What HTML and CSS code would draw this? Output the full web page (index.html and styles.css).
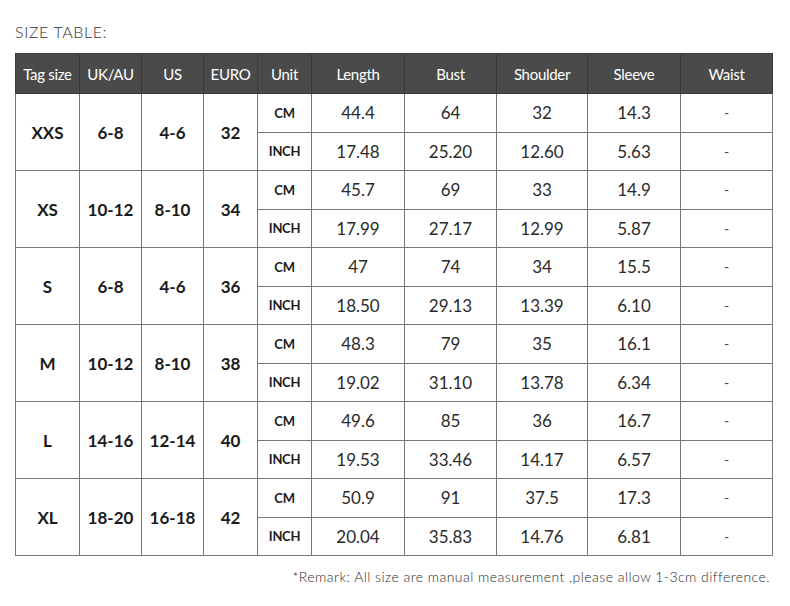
FILE: index.html
```html
<!DOCTYPE html>
<html>
<head>
<meta charset="utf-8">
<link rel="stylesheet" href="styles.css">
</head>
<body>
<div class="page">
  <div class="title">SIZE TABLE:</div>
  <table class="size-table">
    <colgroup>
      <col class="c64"><col class="c62"><col class="c62"><col class="c54"><col class="c54">
      <col class="c93"><col class="c92"><col class="c91"><col class="c93"><col class="c92">
    </colgroup>
    <thead>
      <tr><th>Tag size</th><th>UK/AU</th><th>US</th><th>EURO</th><th>Unit</th><th>Length</th><th>Bust</th><th>Shoulder</th><th>Sleeve</th><th>Waist</th></tr>
    </thead>
    <tbody>
      <tr><td rowspan="2" class="key">XXS</td><td rowspan="2" class="key">6-8</td><td rowspan="2" class="key">4-6</td><td rowspan="2" class="key">32</td><td class="unit">CM</td><td>44.4</td><td>64</td><td>32</td><td>14.3</td><td class="dash">-</td></tr>
      <tr><td class="unit">INCH</td><td>17.48</td><td>25.20</td><td>12.60</td><td>5.63</td><td class="dash">-</td></tr>
      <tr><td rowspan="2" class="key">XS</td><td rowspan="2" class="key">10-12</td><td rowspan="2" class="key">8-10</td><td rowspan="2" class="key">34</td><td class="unit">CM</td><td>45.7</td><td>69</td><td>33</td><td>14.9</td><td class="dash">-</td></tr>
      <tr><td class="unit">INCH</td><td>17.99</td><td>27.17</td><td>12.99</td><td>5.87</td><td class="dash">-</td></tr>
      <tr><td rowspan="2" class="key">S</td><td rowspan="2" class="key">6-8</td><td rowspan="2" class="key">4-6</td><td rowspan="2" class="key">36</td><td class="unit">CM</td><td>47</td><td>74</td><td>34</td><td>15.5</td><td class="dash">-</td></tr>
      <tr><td class="unit">INCH</td><td>18.50</td><td>29.13</td><td>13.39</td><td>6.10</td><td class="dash">-</td></tr>
      <tr><td rowspan="2" class="key">M</td><td rowspan="2" class="key">10-12</td><td rowspan="2" class="key">8-10</td><td rowspan="2" class="key">38</td><td class="unit">CM</td><td>48.3</td><td>79</td><td>35</td><td>16.1</td><td class="dash">-</td></tr>
      <tr><td class="unit">INCH</td><td>19.02</td><td>31.10</td><td>13.78</td><td>6.34</td><td class="dash">-</td></tr>
      <tr><td rowspan="2" class="key">L</td><td rowspan="2" class="key">14-16</td><td rowspan="2" class="key">12-14</td><td rowspan="2" class="key">40</td><td class="unit">CM</td><td>49.6</td><td>85</td><td>36</td><td>16.7</td><td class="dash">-</td></tr>
      <tr><td class="unit">INCH</td><td>19.53</td><td>33.46</td><td>14.17</td><td>6.57</td><td class="dash">-</td></tr>
      <tr><td rowspan="2" class="key">XL</td><td rowspan="2" class="key">18-20</td><td rowspan="2" class="key">16-18</td><td rowspan="2" class="key">42</td><td class="unit">CM</td><td>50.9</td><td>91</td><td>37.5</td><td>17.3</td><td class="dash">-</td></tr>
      <tr><td class="unit">INCH</td><td>20.04</td><td>35.83</td><td>14.76</td><td>6.81</td><td class="dash">-</td></tr>
    </tbody>
  </table>
  <div class="remark">*Remark: All size are manual measurement ,please allow 1-3cm difference.</div>
</div>
</body>
</html>
```
FILE: styles.css
```css
html, body {
  margin: 0;
  padding: 0;
  background: #ffffff;
}
body {
  font-family: "Lato", "Open Sans", sans-serif;
  color: #222;
}
.page {
  padding: 22px 17px 0 15px;
  width: 758px;
}
.title {
  font-size: 16px;
  font-weight: 300;
  color: #333;
  letter-spacing: 0.6px;
  line-height: 20px;
  height: 31px;
}
.size-table {
  border-collapse: collapse;
  table-layout: fixed;
  width: 758px;
}
.c64 { width: 64px; }
.c62 { width: 62px; }
.c54 { width: 54px; }
.c91 { width: 91px; }
.c92 { width: 92px; }
.c93 { width: 93px; }
.size-table th {
  background: #4a4a4a;
  color: #fff;
  font-weight: 400;
  font-size: 15px;
  height: 39px;
  padding: 0;
  border: 1px solid #3a3a3a;
  border-left-color: #7a7a7a;
  text-align: center;
  letter-spacing: -0.3px;
}
.size-table th:first-child { border-left-color: #3a3a3a; }
.size-table td {
  border: 1px solid #777;
  height: 37.5px;
  padding: 0;
  text-align: center;
  font-size: 17px;
  font-weight: 400;
  color: #2a2a2a;
}
.size-table td.key {
  font-weight: 700;
  font-size: 17px;
  color: #1a1a1a;
}
.size-table td.unit {
  font-weight: 700;
  font-size: 13px;
  color: #1a1a1a;
  letter-spacing: -0.3px;
}
.size-table td.dash {
  font-size: 14px;
  color: #444;
}
.remark {
  text-align: right;
  font-size: 14px;
  font-weight: 300;
  color: #2a2a2a;
  letter-spacing: 0.45px;
  padding-top: 12px;
  padding-right: 3px;
}
```
